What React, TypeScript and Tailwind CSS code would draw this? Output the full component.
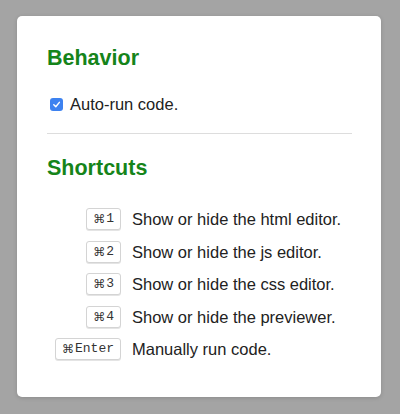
import React from "react";

const rows: [string, string][] = [
  ["1", "Show or hide the html editor."],
  ["2", "Show or hide the js editor."],
  ["3", "Show or hide the css editor."],
  ["4", "Show or hide the previewer."],
  ["Enter", "Manually run code."],
];

export default function App() {
  return (
    <div className="w-[400px] h-[414px] bg-[#a4a4a4] pt-[16px] pl-[17px] overflow-hidden" style={{ fontFamily: '"Liberation Sans", Arial, sans-serif' }}>
      <div className="w-[364px] h-[381px] bg-white rounded-[5px] shadow-[0_1px_4px_rgba(0,0,0,0.15)] pt-[29px] pl-[30px] pr-[29px]">
        <h2 className="text-[21.5px] leading-[26px] font-bold text-[#15841a]">Behavior</h2>
        <label className="mt-[23px] flex items-center h-[20px] text-[16.5px] leading-[20px] text-[#222]">
          <span className="ml-[3px] w-[13px] h-[13px] rounded-[3px] bg-[#3d82f0] flex items-center justify-center">
            <svg width="9" height="9" viewBox="0 0 10 10" fill="none">
              <path d="M2 5.3 L4.2 7.5 L8.2 2.6" stroke="white" strokeWidth="1.6" strokeLinecap="round" strokeLinejoin="round" />
            </svg>
          </span>
          <span className="ml-[7px]">Auto-run code.</span>
        </label>
        <div className="mt-[19px] h-px bg-[#dddddd]" />
        <h2 className="mt-[21px] text-[21.5px] leading-[26px] font-bold text-[#15841a]">Shortcuts</h2>
        <div className="mt-[27px] grid grid-cols-[74px_1fr] gap-x-[11px] gap-y-[10.5px] items-center">
          {rows.map(([k, t]) => (
            <React.Fragment key={k}>
              <div className="flex justify-end">
                <kbd className="h-[22px] px-[6px] flex items-center border border-[#d4d4d4] rounded-[3px] bg-white shadow-[0_1px_0_#e4e4e4] text-[13px] text-[#333]" style={{ fontFamily: '"Liberation Mono", "DejaVu Sans Mono", monospace' }}>
                  <span className="text-[12px] mr-[1px] text-[#333]" style={{ fontFamily: '"DejaVu Sans", sans-serif' }}>⌘</span>
                  {k}
                </kbd>
              </div>
              <div className="text-[16.5px] leading-[22px] text-[#222]">{t}</div>
            </React.Fragment>
          ))}
        </div>
      </div>
    </div>
  );
}
